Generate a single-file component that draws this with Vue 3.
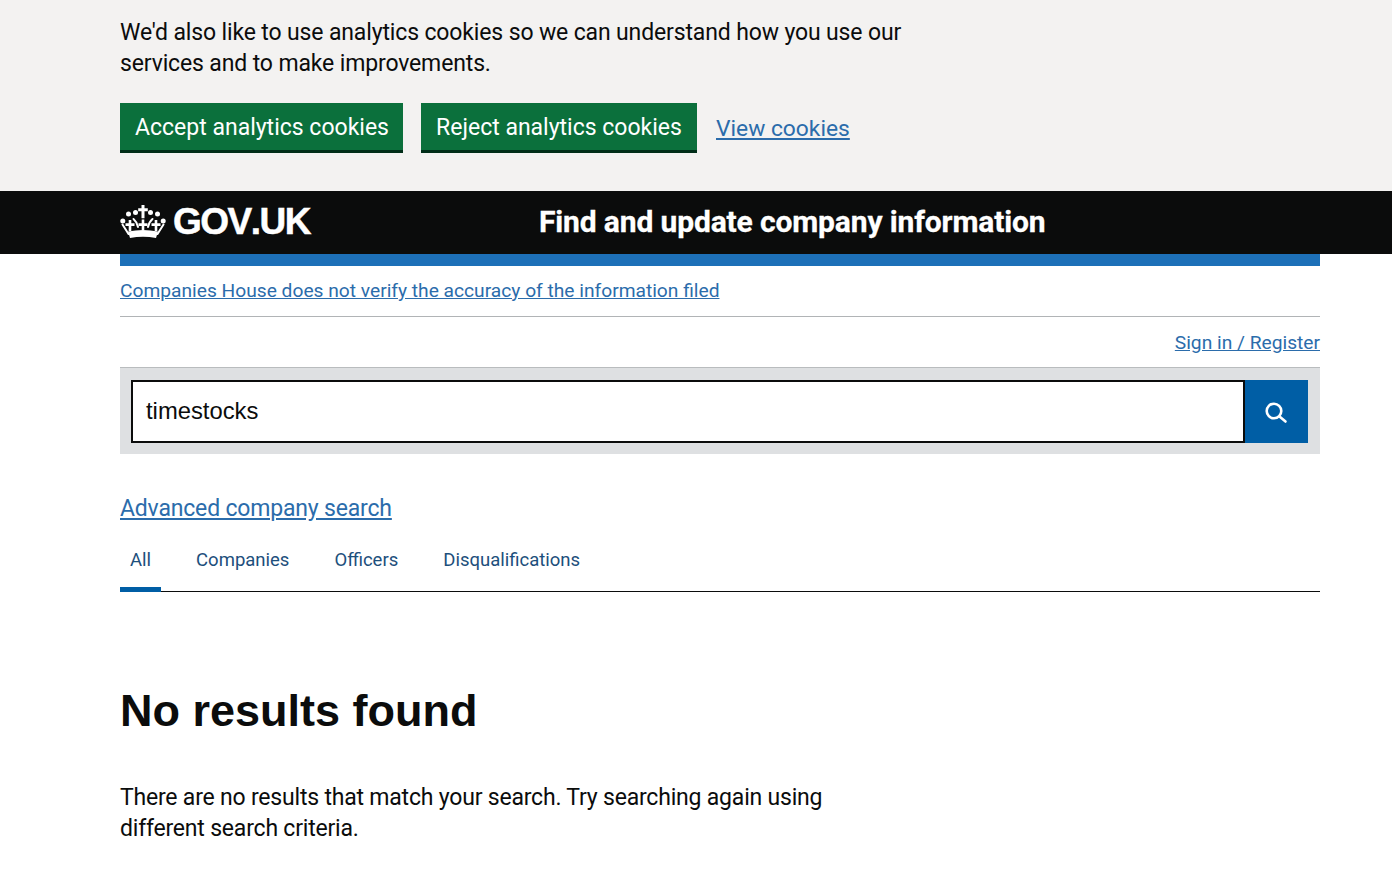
<script setup>
const tabs = ['All', 'Companies', 'Officers', 'Disqualifications']
</script>

<template>
  <div class="page">
    <section class="cookie">
      <div class="wrap">
        <p class="cookie-text">We'd also like to use analytics cookies so we can understand how you use our services and to make improvements.</p>
        <div class="cookie-actions">
          <button class="btn">Accept analytics cookies</button>
          <button class="btn">Reject analytics cookies</button>
          <a class="cookie-link" href="#">View cookies</a>
        </div>
      </div>
    </section>
    <header class="masthead">
      <div class="wrap masthead-in">
        <div class="logo">
          <svg class="crown" viewBox="0 0 46 33" width="46" height="33" aria-hidden="true">
            <g fill="#fff">
              <path d="M21.500 0h3v3.200h3.300v3h-3.300v7h-3v-7h-3.300v-3h3.300z" />
              <circle cx="2.800" cy="16" r="2.500" />
              <circle cx="8.500" cy="9" r="2.500" />
              <circle cx="15.500" cy="7.500" r="2.500" />
              <circle cx="30.500" cy="7.500" r="2.500" />
              <circle cx="37.500" cy="9" r="2.500" />
              <circle cx="43.200" cy="16" r="2.500" />
              <path d="M8 26.500Q23 23.500 38 26.500L36 33Q23 30.500 10 33z" />
              <path d="M8.700 15h2.600v3.300h3.200v2.600h-3.200V26H8.700v-5.100H5.500v-2.600h3.200z" />
              <path d="M21.700 14.500h2.600v3.800h3.200v2.600h-3.200V25h-2.600v-4.100h-3.200v-2.600h3.200z" />
              <path d="M34.700 15h2.600v3.300h3.200v2.600h-3.200V26h-2.600v-5.100h-3.200v-2.600h3.200z" />
            </g>
            <g fill="none" stroke="#fff" stroke-width="2" stroke-linecap="round">
              <path d="M2.500 19.500L8.500 29" />
              <path d="M43.500 19.500L37.500 29" />
              <path d="M13.500 14Q17 17 18 22" />
              <path d="M32.500 14Q29 17 28 22" />
            </g>
          </svg>
          <span class="logo-text">GOV.UK</span>
        </div>
        <span class="service">Find and update company information</span>
      </div>
    </header>
    <main class="wrap">
      <div class="blue-bar"></div>
      <div class="notice">
        <a href="#">Companies House does not verify the accuracy of the information filed</a>
      </div>
      <div class="signin"><a href="#">Sign in / Register</a></div>
      <div class="search">
        <div class="search-input">timestocks</div>
        <div class="search-btn">
          <svg viewBox="0 0 24 24" width="24" height="24" fill="none" stroke="#fff" stroke-width="2.600" aria-hidden="true">
            <circle cx="9" cy="11" r="7.300" />
            <path d="M14.500 16.500l6 5" stroke-linecap="round" />
          </svg>
        </div>
      </div>
      <a class="advanced" href="#">Advanced company search</a>
      <nav class="tabs">
        <a v-for="(tab, i) in tabs" :key="tab" href="#" class="tab" :class="{ active: i === 0 }">{{ tab }}</a>
      </nav>
      <h1 class="title">No results found</h1>
      <p class="body">There are no results that match your search. Try searching again using different search criteria.</p>
    </main>
  </div>
</template>

<style>
html, body { margin: 0; background: #fff; }
</style>

<style scoped>
.page {
  font-family: Roboto, "Noto Sans", sans-serif;
  color: #0b0c0c;
  min-height: 891px;
  overflow: hidden;
}
.wrap { width: 1200px; margin-left: 120px; }
.cookie { background: #f3f2f1; height: 191px; }
.cookie-text {
  margin: 0;
  padding-top: 17px;
  width: 800px;
  font-size: 23px;
  letter-spacing: -0.14px;
  line-height: 31px;
}
.cookie-actions { display: flex; align-items: flex-start; margin-top: 24px; }
.btn {
  font: inherit;
  font-size: 23px;
  line-height: 28px;
  color: #fff;
  background: #0b703c;
  border: 0;
  border-bottom: 3px solid #002d18;
  padding: 11px 15px 8px 15px;
  height: 50px;
  width: 283px;
  margin-right: 18px;
  white-space: nowrap;
}
.btn + .btn { width: 276px; }
.cookie-link {
  margin-left: 1px;
  font-size: 22.800px;
  line-height: 51px;
  color: #2b6cab;
}
.masthead { background: #0b0c0c; height: 63px; color: #fff; }
.masthead-in { display: flex; align-items: center; height: 63px; }
.logo { display: flex; align-items: center; width: 419px; }
.crown { margin: 0 7px 3px 0; }
.logo-text {
  font-family: "Liberation Sans", Arial, sans-serif;
  font-weight: 700;
  font-size: 37px;
  font-kerning: none;
  letter-spacing: -1.500px;
  line-height: 44px;
  margin-bottom: 2px;
  -webkit-text-stroke: 0.5px #fff;
}
.service {
  font-size: 30px;
  font-weight: 700;
  letter-spacing: -0.14px;
  margin-bottom: 2px;
  -webkit-text-stroke: 0.3px #fff;
  white-space: nowrap;
}
.blue-bar { height: 12px; background: #1d70b8; }
.notice {
  height: 50px;
  border-bottom: 1px solid #b1b4b6;
  font-size: 19.200px;
  line-height: 50px;
}
.notice a, .signin a { color: #2b6cab; }
.signin {
  height: 50px;
  text-align: right;
  font-size: 19.200px;
  line-height: 52px;
}
.search {
  display: flex;
  height: 87px;
  box-sizing: border-box;
  padding: 12px 12px 11px 11px;
  background: #dee0e2;
  border-top: 1px solid #b9bcbe;
}
.search-input {
  flex: 1;
  box-sizing: border-box;
  border: 2px solid #0b0c0c;
  background: #fff;
  font-family: "Liberation Sans", Arial, sans-serif;
  font-size: 23.800px;
  line-height: 58px;
  padding-left: 13px;
}
.search-btn {
  width: 63px;
  background: #005ea5;
  display: flex;
  align-items: center;
  justify-content: center;
}
.advanced {
  display: block;
  margin-top: 39px;
  font-size: 23px;
  letter-spacing: -0.18px;
  line-height: 31px;
  color: #2b6cab;
  width: max-content;
}
.tabs {
  display: flex;
  margin-top: 16px;
  height: 51px;
  border-bottom: 1px solid #0b0c0c;
}
.tab {
  height: 51px;
  box-sizing: border-box;
  padding: 6px 10px 0;
  margin-right: 25px;
  font-size: 18.500px;
  line-height: 28px;
  color: #1d4f7c;
  text-decoration: none;
}
.tab.active { border-bottom: 5px solid #005ea5; height: 52px; }
.title {
  margin: 92px 0 0;
  font-family: "Liberation Sans", Arial, sans-serif;
  font-size: 45px;
  line-height: 54px;
  font-weight: 700;
}
.body {
  margin: 44px 0 0;
  width: 760px;
  font-size: 23px;
  letter-spacing: -0.2px;
  line-height: 31px;
}
</style>
